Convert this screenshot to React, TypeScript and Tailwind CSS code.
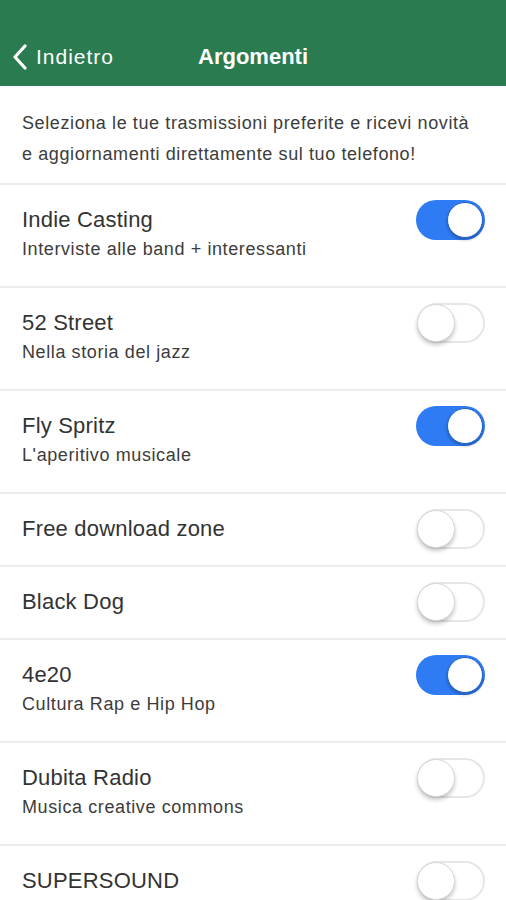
import React from "react";

type Item = { title: string; sub?: string; on: boolean; tall?: boolean };

const items: Item[] = [
  { title: "Indie Casting", sub: "Interviste alle band + interessanti", on: true },
  { title: "52 Street", sub: "Nella storia del jazz", on: false },
  { title: "Fly Spritz", sub: "L'aperitivo musicale", on: true },
  { title: "Free download zone", on: false },
  { title: "Black Dog", on: false },
  { title: "4e20", sub: "Cultura Rap e Hip Hop", on: true },
  { title: "Dubita Radio", sub: "Musica creative commons", on: false },
  { title: "SUPERSOUND", on: false, tall: true },
];

function Toggle({ on }: { on: boolean }) {
  if (on) {
    return (
      <div className="relative h-[40px] w-[69px] rounded-full bg-[#2f7bf3]">
        <div className="absolute right-[2px] top-[2px] h-[36px] w-[36px] rounded-full border border-[#1d5fc9] bg-white shadow-[0_2px_3px_rgba(0,0,0,0.25)]" />
      </div>
    );
  }
  return (
    <div className="relative h-[40px] w-[68px] rounded-full border-2 border-[#e6e6e6] bg-white">
      <div className="absolute left-[-2px] top-[-1px] h-[38px] w-[38px] rounded-full border border-[#d8d8d8] bg-white shadow-[0_3px_4px_rgba(0,0,0,0.22)]" />
    </div>
  );
}

export default function App() {
  return (
    <div
      className="w-[506px] h-[900px] overflow-hidden bg-white"
      style={{ fontFamily: '"Liberation Sans", Arial, sans-serif' }}
    >
      <div className="flex h-[86px] items-end bg-[#2a7b4f] pb-[16px] text-white">
        <div className="flex items-center pl-[12px]">
          <svg width="16" height="26" viewBox="0 0 16 26" className="mr-[8px]">
            <polyline points="13,2 3,13 13,24" fill="none" stroke="white" strokeWidth="3.2" strokeLinecap="round" strokeLinejoin="round" />
          </svg>
          <span className="text-[21px] leading-[26px] tracking-[1px]">Indietro</span>
        </div>
        <span className="ml-[84px] text-[22px] font-bold leading-[26px]">Argomenti</span>
      </div>
      <div className="border-b-2 border-[#ececec] px-[22px] pt-[22px] pb-[13px] text-[18px] leading-[31px] tracking-[0.6px] text-[#3c3c3c]">
        Seleziona le tue trasmissioni preferite e ricevi novità e aggiornamenti direttamente sul tuo telefono!
      </div>
      {items.map((it) => (
        <div
          key={it.title}
          className={`flex items-start justify-between border-b-2 border-[#ececec] pl-[22px] pr-[21px] ${it.sub || it.tall ? "h-[103px]" : "h-[73px]"}`}
        >
          <div className="pt-[22px]">
            <div className="text-[22px] leading-[26px] tracking-[0.2px] text-[#333]">{it.title}</div>
            {it.sub && <div className="mt-[5px] text-[18px] leading-[22px] tracking-[0.6px] text-[#3c3c3c]">{it.sub}</div>}
          </div>
          <div className="pt-[15px]">
            <Toggle on={it.on} />
          </div>
        </div>
      ))}
    </div>
  );
}
